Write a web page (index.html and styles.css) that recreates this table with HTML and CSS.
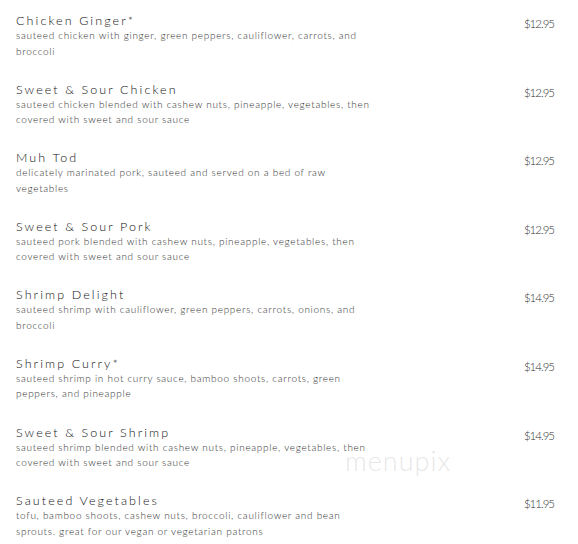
FILE: index.html
```html
<!DOCTYPE html>
<html>
<head>
<meta charset="utf-8">
<link rel="stylesheet" href="styles.css">
</head>
<body>
<div class="menu">
  <div class="item">
    <div class="info">
      <div class="name">Chicken Ginger*</div>
      <div class="desc">sauteed chicken with ginger, green peppers, cauliflower, carrots, and broccoli</div>
    </div>
    <div class="price">$12.95</div>
  </div>
  <div class="item">
    <div class="info">
      <div class="name">Sweet &amp; Sour Chicken</div>
      <div class="desc">sauteed chicken blended with cashew nuts, pineapple, vegetables, then covered with sweet and sour sauce</div>
    </div>
    <div class="price">$12.95</div>
  </div>
  <div class="item">
    <div class="info">
      <div class="name">Muh Tod</div>
      <div class="desc">delicately marinated pork, sauteed and served on a bed of raw vegetables</div>
    </div>
    <div class="price">$12.95</div>
  </div>
  <div class="item">
    <div class="info">
      <div class="name">Sweet &amp; Sour Pork</div>
      <div class="desc">sauteed pork blended with cashew nuts, pineapple, vegetables, then covered with sweet and sour sauce</div>
    </div>
    <div class="price">$12.95</div>
  </div>
  <div class="item">
    <div class="info">
      <div class="name">Shrimp Delight</div>
      <div class="desc">sauteed shrimp with cauliflower, green peppers, carrots, onions, and broccoli</div>
    </div>
    <div class="price">$14.95</div>
  </div>
  <div class="item">
    <div class="info">
      <div class="name">Shrimp Curry*</div>
      <div class="desc">sauteed shrimp in hot curry sauce, bamboo shoots, carrots, green peppers, and pineapple</div>
    </div>
    <div class="price">$14.95</div>
  </div>
  <div class="item">
    <div class="info">
      <div class="name">Sweet &amp; Sour Shrimp</div>
      <div class="desc">sauteed shrimp blended with cashew nuts, pineapple, vegetables, then covered with sweet and sour sauce</div>
    </div>
    <div class="price">$14.95</div>
  </div>
  <div class="item">
    <div class="info">
      <div class="name">Sauteed Vegetables</div>
      <div class="desc">tofu, bamboo shoots, cashew nuts, broccoli, cauliflower and bean sprouts. great for our vegan or vegetarian patrons</div>
    </div>
    <div class="price">$11.95</div>
  </div>
  <div class="watermark">menupix</div>
</div>
</body>
</html>
```

FILE: styles.css
```css
html, body {
  margin: 0;
  padding: 0;
  background: #fff;
}
body {
  font-family: Lato, "Liberation Sans", sans-serif;
  font-weight: 300;
  color: #333;
}
.menu {
  position: relative;
  padding: 14px 24px 0 16px;
}
.item {
  display: flex;
  justify-content: space-between;
  align-items: flex-start;
  height: 68.6px;
}
.info {
  width: 356px;
}
.name {
  font-size: 12.5px;
  letter-spacing: 2.1px;
  line-height: 14px;
  color: #111;
  font-weight: 300;
}
.desc {
  font-size: 10px;
  letter-spacing: 0.7px;
  line-height: 15.5px;
  color: #333;
}
.price {
  font-size: 11.5px;
  letter-spacing: -1px;
  line-height: 14px;
  color: #333;
  padding-top: 3px;
}
.watermark {
  position: absolute;
  left: 345px;
  top: 449px;
  font-size: 27px;
  letter-spacing: 1px;
  line-height: 24px;
  color: rgba(200, 200, 200, 0.45);
  font-weight: 300;
}
```
